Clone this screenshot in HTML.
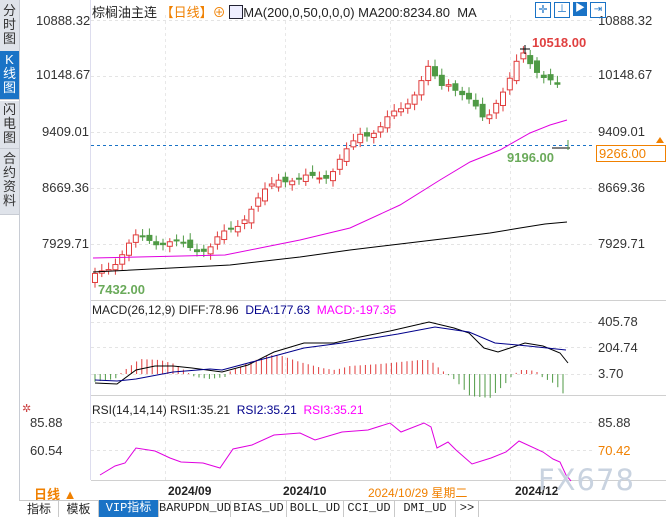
<!DOCTYPE html><html><head><meta charset="utf-8"><style>
body{margin:0;width:666px;height:517px;overflow:hidden;background:#fff;font-family:"Liberation Sans","Noto Sans CJK SC",sans-serif;position:relative}
.a{position:absolute;white-space:nowrap}
.side{position:absolute;left:0;width:19px;background:#dfe3ea;color:#333;font-size:13px;line-height:14px;text-align:center;border-bottom:1px solid #c8ccd4}
.yl{position:absolute;font-size:13px;color:#333}
.tab{position:absolute;top:500px;height:17px;font-size:12px;line-height:17px;text-align:center;border-right:1px solid #c9c9c9;color:#222;font-family:"Liberation Mono","Noto Sans CJK SC",monospace}
</style></head><body>
<div class="side" style="top:0;height:51px;padding-top:4px">分<br>时<br>图</div>
<div class="side" style="top:51px;height:46px;background:#1a73c6;color:#fff;padding-top:2px">K<br>线<br>图</div>
<div class="side" style="top:101px;height:45px;padding-top:2px">闪<br>电<br>图</div>
<div class="side" style="top:149px;height:62px;padding-top:3px">合<br>约<br>资<br>料</div>
<div style="position:absolute;left:19px;top:0;width:1px;height:500px;background:#c8ccd4"></div>
<div style="position:absolute;left:90px;top:0;width:1px;height:480px;background:#dde"></div>
<svg id="s" width="666" height="517" style="position:absolute;left:0;top:0"></svg>
<div class="a" style="left:92px;top:2px;font-size:13px;color:#222">棕榈油主连 <span style="color:#f08000">【日线】</span><span style="color:#f08000">⊕</span> <span style="display:inline-block;width:12px;height:12px;border:1px solid #223;vertical-align:-2px;background:#eef"></span>MA(200,0,50,0,0,0) MA200:8234.80 &nbsp;MA</div>
<div class="yl" style="left:36px;top:13px">10888.32</div><div class="yl" style="left:36px;top:67px">10148.67</div><div class="yl" style="left:42px;top:124px">9409.01</div><div class="yl" style="left:42px;top:180px">8669.36</div><div class="yl" style="left:42px;top:236px">7929.71</div>
<div class="yl" style="left:598px;top:13px">10888.32</div><div class="yl" style="left:598px;top:67px">10148.67</div><div class="yl" style="left:598px;top:124px">9409.01</div><div class="yl" style="left:598px;top:180px">8669.36</div><div class="yl" style="left:598px;top:236px">7929.71</div>
<div class="yl" style="left:596px;top:145px;width:66px;height:15px;border:1px solid #f08000;color:#f08000;line-height:15px;padding-left:2px">9266.00</div>
<div class="a" style="left:532px;top:35px;font-size:13px;color:#e04040;font-weight:bold">10518.00</div>
<div class="a" style="left:507px;top:150px;font-size:13px;color:#6aaa5a;font-weight:bold">9196.00</div>
<div class="a" style="left:98px;top:282px;font-size:13px;color:#6aaa5a;font-weight:bold">7432.00</div>
<div class="a" style="left:92px;top:303px;font-size:12px;color:#222">MACD(26,12,9) DIFF:78.96 &nbsp;<span style="color:#00008b">DEA:177.63</span> &nbsp;<span style="color:#f0f">MACD:-197.35</span></div>
<div class="yl" style="left:598px;top:314px">405.78</div><div class="yl" style="left:598px;top:340px">204.74</div><div class="yl" style="left:598px;top:366px">3.70</div>
<div class="a" style="left:92px;top:403px;font-size:12px;color:#222">RSI(14,14,14) RSI1:35.21 &nbsp;<span style="color:#00008b">RSI2:35.21</span> &nbsp;<span style="color:#f0f">RSI3:35.21</span></div>
<div class="yl" style="left:30px;top:415px">85.88</div><div class="yl" style="left:30px;top:443px">60.54</div>
<div class="yl" style="left:598px;top:415px">85.88</div><div class="yl" style="left:598px;top:443px;color:#f08000">70.42</div>
<div class="a" style="left:22px;top:402px;color:#c44;font-size:11px">✲</div>
<div class="a" style="left:34px;top:484px;font-size:13px;color:#f08000;font-weight:bold">日线 ▲</div>
<div class="a" style="left:168px;top:484px;font-size:12px;color:#222;font-weight:bold">2024/09</div>
<div class="a" style="left:283px;top:484px;font-size:12px;color:#222;font-weight:bold">2024/10</div>
<div class="a" style="left:368px;top:484px;font-size:12px;color:#f08000">2024/10/29 星期二</div>
<div class="a" style="left:515px;top:484px;font-size:12px;color:#222;font-weight:bold">2024/12</div>
<div class="a" style="left:538px;top:463px;font-size:29px;color:#c9d3e0;font-family:'DejaVu Sans',sans-serif;letter-spacing:1px">FX678</div>
<div style="position:absolute;left:19px;top:500px;width:647px;height:1px;background:#c9c9c9"></div>
<div class="tab" style="left:20px;width:38px;font-family:'Noto Sans CJK SC'">指标</div>
<div class="tab" style="left:59px;width:39px;font-family:'Noto Sans CJK SC'">模板</div>
<div class="tab" style="left:99px;width:59px;background:#1a73c6;color:#fff">VIP指标</div>
<div class="tab" style="left:159px;width:71px">BARUPDN_UD</div>
<div class="tab" style="left:231px;width:55px">BIAS_UD</div>
<div class="tab" style="left:287px;width:56px">BOLL_UD</div>
<div class="tab" style="left:344px;width:50px">CCI_UD</div>
<div class="tab" style="left:395px;width:60px">DMI_UD</div>
<div class="tab" style="left:456px;width:22px">&gt;&gt;</div>
<script>
var s=document.getElementById('s'),h='';
function L(x1,y1,x2,y2,c,d){h+='<line x1="'+x1+'" y1="'+y1+'" x2="'+x2+'" y2="'+y2+'" stroke="'+c+'" '+(d?'stroke-dasharray="3,3"':'')+'/>';}
[20,76,132,188,244].forEach(y=>L(91,y+.5,595,y+.5,'#e4e4e4',1));
[322,347,374].forEach(y=>L(91,y+.5,595,y+.5,'#e4e4e4',1));
[422,450].forEach(y=>L(91,y+.5,595,y+.5,'#e4e4e4',1));
[165,285,390,510].forEach(x=>L(x+.5,15,x+.5,480,'#e8e8e8',1));
[300,395,480].forEach(y=>L(91,y+.5,666,y+.5,'#d0d0d0'));
L(91,145.5,595,145.5,'#1a73c6',1);
var wp=[[93,280],[110,265],[135,240],[150,238],[175,245],[210,248],[230,230],[260,200],[280,175],[300,182],[330,172],[350,150],[360,133],[380,128],[400,110],[415,90],[428,70],[440,88],[450,80],[460,90],[475,110],[485,122],[495,100],[510,80],[522,55],[530,62],[540,70],[550,80],[560,92]];
function iy(x,w){if(x<=w[0][0])return w[0][1];for(var i=1;i<w.length;i++)if(x<=w[i][0]){var a=w[i-1],b=w[i];return a[1]+(b[1]-a[1])*(x-a[0])/(b[0]-a[0]);}return w[w.length-1][1];}
var prev=282;
for(var x=95;x<=562;x+=6.8){var c=iy(x,wp)+Math.sin(x*1.7)*5,o=prev+Math.cos(x*2.3)*3;var up=c<o;var col=up?'#e03c3c':'#4f9a45';var t=Math.min(o,c),b=Math.max(o,c);if(b-t<1)b=t+1;
L(x,t-3-Math.abs(Math.sin(x))*4,x,b+3+Math.abs(Math.cos(x))*3,col);
h+='<rect x="'+(x-2.5)+'" y="'+t+'" width="5" height="'+(b-t)+'" fill="'+(up?'#fff':col)+'" stroke="'+col+'"/>';prev=c;}
L(520,49,530,49,'#000');L(525,45,525,54,'#000');
L(552,148,570,148,'#000');L(568,140,568,150,'#4f9a45');
h+='<path d="M660,137 l-4,6 h8z" fill="#f08000"/>';
function P(w,c){h+='<polyline fill="none" stroke="'+c+'" points="'+w.map(p=>p.join(',')).join(' ')+'"/>';}
P([[93,258],[225,255],[260,248],[300,240],[350,228],[400,205],[440,180],[470,162],[500,150],[530,133],[550,125],[567,120]],'#e000e0');
P([[93,272],[230,265],[300,257],[350,250],[400,244],[450,238],[490,233],[520,228],[545,224],[567,222]],'#000');
var hist=[[93,-8],[115,-5],[122,2],[140,15],[160,14],[175,10],[190,0],[195,-3],[210,-5],[225,-3],[229,2],[250,12],[270,19],[282,18],[300,12],[322,6],[335,4],[350,8],[380,10],[420,14],[430,14],[440,5],[447,0],[455,-6],[470,-22],[490,-24],[505,-10],[512,-2],[520,4],[530,4],[537,2],[542,-3],[555,-10],[562,-18],[568,-26]];
for(var x=95;x<=568;x+=5.2){var v=iy(x,hist);var y0=374;L(x,y0,x,y0-v,v>0?'#e03c3c':'#4f9a45');}
P([[95,383],[117,384],[136,370],[155,366],[173,366],[192,368],[222,372],[248,365],[274,352],[304,343],[334,343],[360,337],[390,331],[429,322],[454,328],[469,333],[484,348],[498,352],[525,343],[543,346],[560,353],[568,363]],'#000');
P([[95,380],[117,381],[136,379],[173,372],[210,369],[222,370],[267,358],[304,348],[342,343],[398,334],[435,327],[469,332],[495,343],[528,346],[566,350]],'#00008b');
P([[100,475],[115,466],[125,463],[136,448],[155,451],[170,458],[181,462],[203,463],[220,468],[233,449],[252,445],[274,435],[300,433],[315,440],[342,432],[368,430],[390,423],[401,432],[424,423],[431,427],[437,448],[448,442],[456,450],[472,464],[491,458],[506,452],[519,441],[543,452],[553,459],[560,462],[566,475],[571,481]],'#e000e0');
s.innerHTML=h;
</script>
<div style="position:absolute;left:535px;top:2px;display:flex;gap:3px"><div style="width:14px;height:14px;border:1px solid #1a73c6;color:#1a73c6;font-size:11px;line-height:14px;text-align:center">✛</div><div style="width:14px;height:14px;border:1px solid #1a73c6;color:#1a73c6;font-size:10px;line-height:14px;text-align:center">⊥</div><div style="width:14px;height:14px;background:#1a73c6;color:#fff;font-size:10px;line-height:14px;text-align:center">▶</div><div style="width:14px;height:14px;border:1px solid #1a73c6;color:#1a73c6;font-size:10px;line-height:14px;text-align:center">⇥</div></div>
</body></html>
